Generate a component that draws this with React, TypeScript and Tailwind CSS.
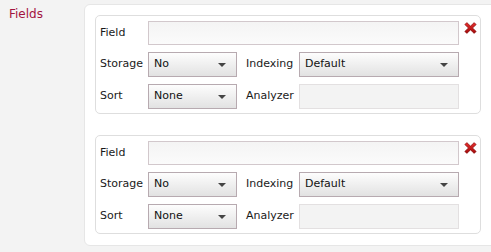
const FIELDS = [
  { storage: 'No', indexing: 'Default', sort: 'None' },
  { storage: 'No', indexing: 'Default', sort: 'None' },
];

function Select({ value, width }: { value: string; width: string }) {
  return (
    <div
      className={`${width} relative flex h-[25px] items-center border border-[#b7aab0] bg-gradient-to-b from-[#fdfdfd] to-[#e2e2e2] pl-[5px] text-[11px] text-[#111]`}
    >
      {value}
      <span className="absolute right-[10px] top-[10px] h-0 w-0 border-x-[4px] border-t-[4px] border-x-transparent border-t-[#444]" />
    </div>
  );
}

function RemoveIcon() {
  return (
    <svg width="13" height="12" viewBox="0 0 13 12" className="ml-[5px] mt-[2px] shrink-0">
      <defs>
        <linearGradient id="xg" x1="0" y1="0" x2="0" y2="1">
          <stop offset="0" stopColor="#e83030" />
          <stop offset="1" stopColor="#a00808" />
        </linearGradient>
      </defs>
      <path
        d="M0.8 2.6 L2.8 0.6 L6.5 4.1 L10.2 0.6 L12.2 2.6 L8.6 6 L12.2 9.4 L10.2 11.4 L6.5 7.9 L2.8 11.4 L0.8 9.4 L4.4 6 Z"
        fill="url(#xg)"
        stroke="#800808"
        strokeWidth="0.6"
        strokeLinejoin="round"
      />
    </svg>
  );
}

function FieldCard({ field }: { field: (typeof FIELDS)[number] }) {
  return (
    <div className="w-[386px] rounded-[5px] border border-[#dedede] bg-white pb-[4px] pl-[4px] pt-[4px]">
      <div className="flex items-start">
        <div className="mt-[1px] flex h-[24px] w-[48px] items-center">Field</div>
        <div className="mt-[1px] h-[24px] w-[311px] border border-[#d2c8cc] bg-gradient-to-b from-[#f4f4f4] to-[#fbfbfb]" />
        <RemoveIcon />
      </div>
      <div className="mt-[7px] flex items-center">
        <div className="w-[48px]">Storage</div>
        <Select value={field.storage} width="w-[89px]" />
        <div className="ml-[9px] w-[53px]">Indexing</div>
        <Select value={field.indexing} width="w-[160px]" />
      </div>
      <div className="mt-[7px] flex items-center">
        <div className="w-[48px]">Sort</div>
        <Select value={field.sort} width="w-[89px]" />
        <div className="ml-[9px] w-[53px]">Analyzer</div>
        <div className="h-[25px] w-[160px] border border-[#e3e0e1] bg-[#f3f3f3]" />
      </div>
    </div>
  );
}

export default function App() {
  return (
    <div className="flex h-[252px] w-[491px] overflow-hidden bg-[#f3f3f3] font-['DejaVu_Sans',sans-serif] text-[11px] text-[#1a1a1a]">
      <div className="w-[84px] shrink-0 pl-[9px] pt-[5px] text-[12px] text-[#a3133f]">Fields</div>
      <div className="mt-[4px] h-[242px] w-[430px] shrink-0 rounded-l-[6px] border border-[#e6e6e6] bg-white pl-[10px] pt-[10px]">
        <div className="flex flex-col gap-[21px]">
          {FIELDS.map((f, i) => (
            <FieldCard key={i} field={f} />
          ))}
        </div>
      </div>
    </div>
  );
}
